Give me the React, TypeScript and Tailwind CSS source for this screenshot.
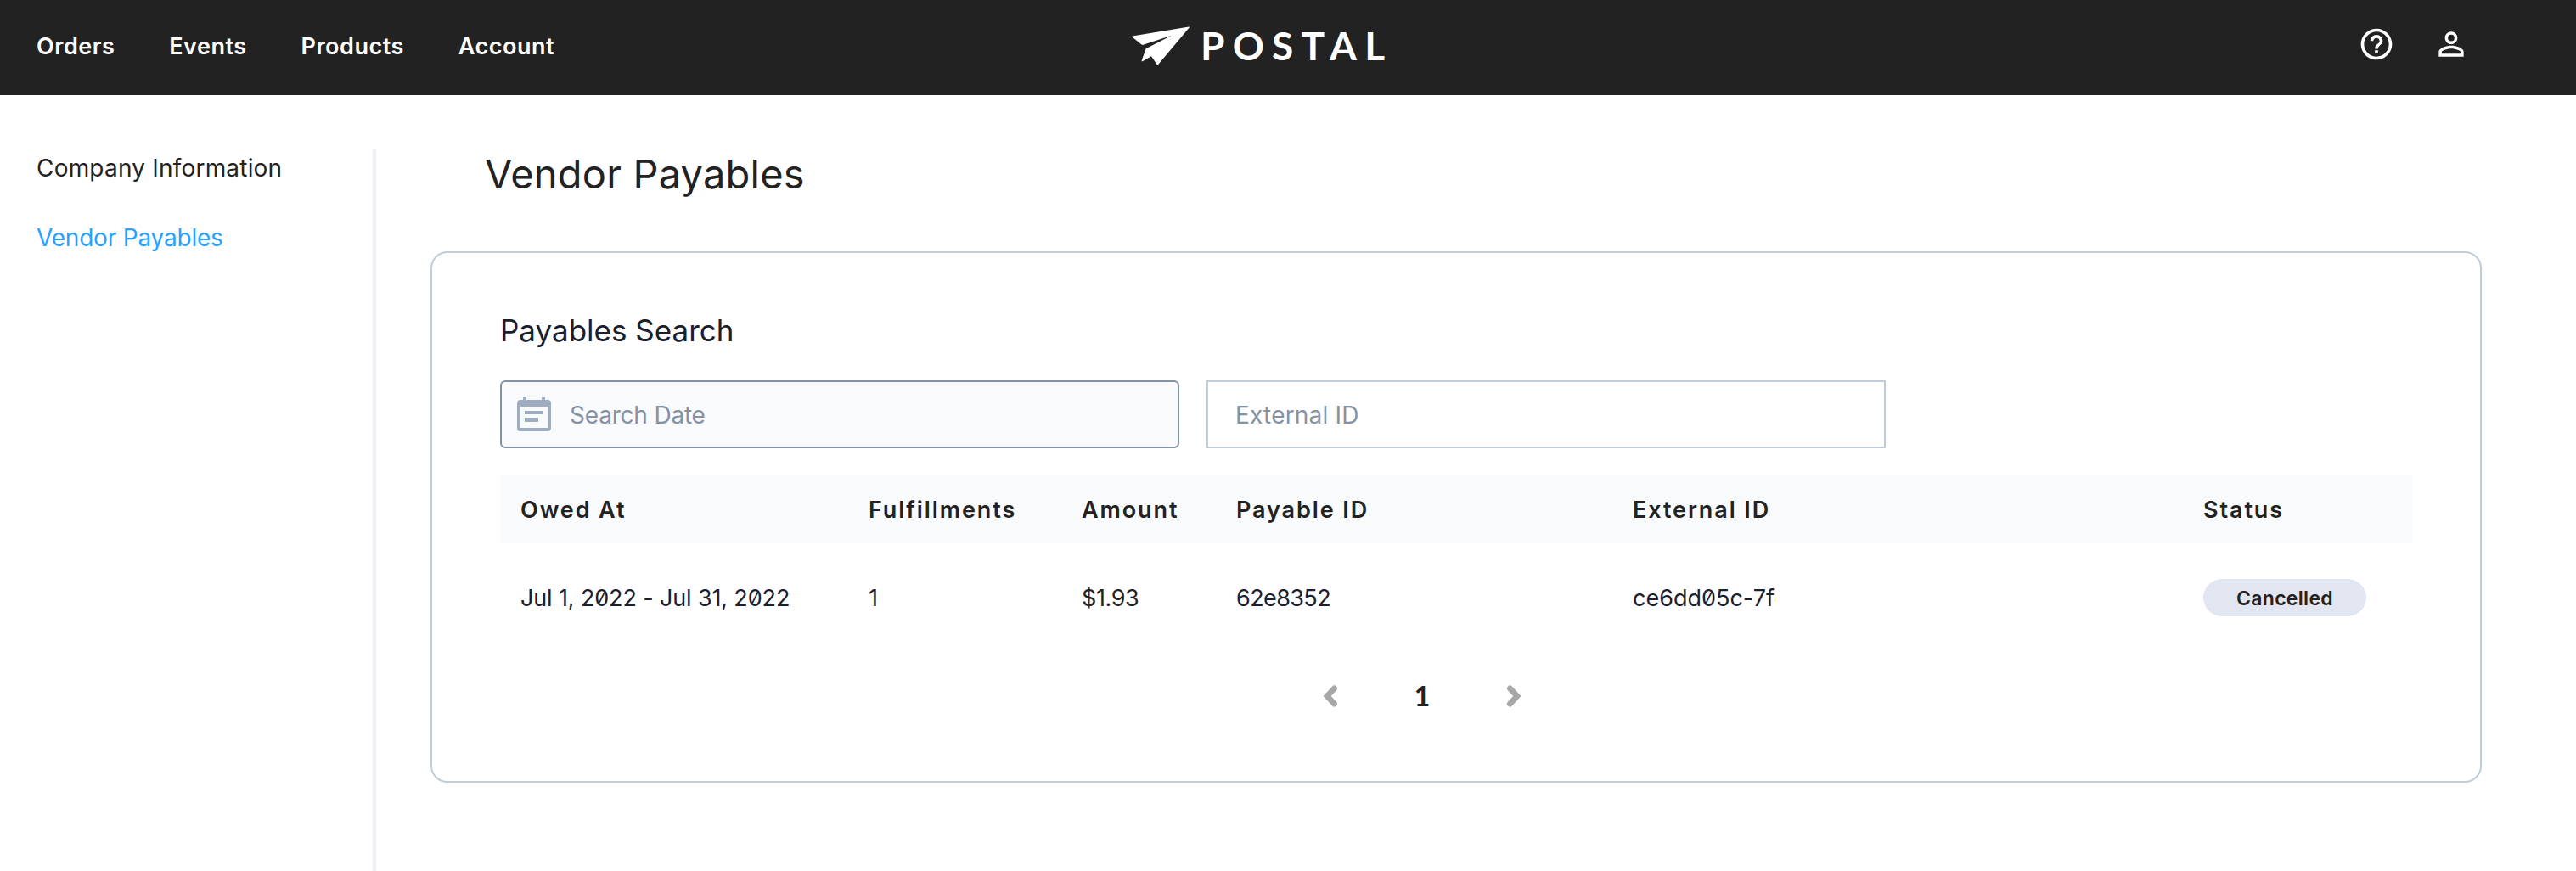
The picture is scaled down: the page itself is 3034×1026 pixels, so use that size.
import { useState } from "react";
import { MdHelpOutline, MdPersonOutline } from "react-icons/md";

const navLinks = ["Orders", "Events", "Products", "Account"];

const payables = [
  {
    owedAt: "Jul 1, 2022 - Jul 31, 2022",
    fulfillments: 1,
    amount: "$1.93",
    payableId: "62e8352c",
    externalId: "ce6dd05c-7fc",
    status: "Cancelled",
  },
];

const PlaneLogo = () => (
  <svg width="68" height="46" viewBox="0 0 204 137" fill="white">
    <path d="M2 34 202 1 Q205 1 203 4 L94 134 Q91 137 88 133 L69 105 38 123 Q34 125 35 120 L50 78 141 32 40 65 Q37 66 34 63 L2 38 Q-1 35 2 34Z" />
  </svg>
);

const CalendarIcon = () => (
  <svg width="40" height="40" viewBox="0 0 40 40" fill="#9fadc1" className="shrink-0">
    <path d="M7 0h4v3h18V0h4v3h3a4 4 0 0 1 4 4v29a4 4 0 0 1-4 4H4a4 4 0 0 1-4-4V7a4 4 0 0 1 4-4h3zM4 11v25h32V11z" fillRule="evenodd" />
    <path d="M9 16h22v4H9zM9 24h16v5H9z" />
  </svg>
);

const Chevron = ({ className = "" }: { className?: string }) => (
  <svg width="18" height="26" viewBox="0 0 18 26" fill="none" stroke="#a7a7a7" strokeWidth="6.8" strokeLinecap="round" className={className}>
    <path d="M13.6 3.9 5.2 13l8.4 9.1" />
  </svg>
);

const Header = () => (
  <header className="flex h-28 items-center bg-[#222] pb-1 text-white">
    <nav className="flex w-[1333px] shrink-0 gap-16 pt-0.5 pl-[43px] text-[27px] font-semibold tracking-[0.5px]">
      {navLinks.map((link) => (
        <a key={link} href="#">{link}</a>
      ))}
    </nav>
    <a href="#" className="flex items-center gap-[13px]">
      <PlaneLogo />
      <span className="font-['Lato',sans-serif] text-[46px] leading-none font-bold tracking-[9.2px]">POSTAL</span>
    </a>
    <div className="ml-auto flex items-center gap-11 pr-[125px] pb-1">
      <MdHelpOutline size={44} />
      <MdPersonOutline size={44} />
    </div>
  </header>
);

const Sidebar = () => (
  <aside className="flex w-[443px] shrink-0 flex-col gap-[42px] border-r-4 border-[#edf1f6] pt-0.5 pl-[43px] text-[28px] leading-10">
    <a href="#" className="tracking-[0.2px]">Company Information</a>
    <a href="#" className="tracking-[-0.2px] text-[#27a2ff]">Vendor Payables</a>
  </aside>
);

const PayablesTable = () => (
  <table className="mt-8 w-full table-fixed text-left text-[27px]">
    <colgroup>
      <col className="w-[410px]" />
      <col className="w-[251px]" />
      <col className="w-[182px]" />
      <col className="w-[467px]" />
      <col className="w-[672px]" />
      <col className="w-[270px]" />
    </colgroup>
    <thead>
      <tr className="h-20 bg-[#f9fafc] tracking-[1.9px]">
        <th className="pt-0.5 pl-6 font-semibold">Owed At</th>
        <th className="pt-0.5 pl-6 font-semibold">Fulfillments</th>
        <th className="pt-0.5 pl-6 font-semibold">Amount</th>
        <th className="pt-0.5 pl-6 font-semibold">Payable ID</th>
        <th className="pt-0.5 pl-6 font-semibold">External ID</th>
        <th className="pt-0.5 pl-6 font-semibold">Status</th>
      </tr>
    </thead>
    <tbody>
      {payables.map((p) => (
        <tr key={p.payableId} className="h-32 text-[#1a202e] [font-feature-settings:'zero']">
          <td className="pt-0.5 pl-6 tracking-[-0.14px]">{p.owedAt}</td>
          <td className="pt-0.5 pl-6">{p.fulfillments}</td>
          <td className="pt-0.5 pl-6 tracking-[-0.4px] text-[#222]">{p.amount}</td>
          <td className="pt-0.5 pl-6">
            <div className="w-[111px] overflow-hidden tracking-[-0.6px]">{p.payableId}</div>
          </td>
          <td className="pt-0.5 pl-6">
            <div className="w-[168px] overflow-hidden whitespace-nowrap">{p.externalId}</div>
          </td>
          <td className="pl-6">
            <div className="flex h-11 w-48 items-center justify-center rounded-full bg-[#e1e6f0] pt-0.5 text-[23px] font-semibold tracking-[0.3px] text-[#222]">
              {p.status}
            </div>
          </td>
        </tr>
      ))}
    </tbody>
  </table>
);

export default function App() {
  const [date, setDate] = useState("");
  const [externalId, setExternalId] = useState("");

  return (
    <div className="flex h-[1026px] w-[3034px] flex-col overflow-hidden bg-white font-['Inter',sans-serif] text-[#222]">
      <Header />
      <div className="flex flex-1 pt-16">
        <Sidebar />
        <main className="ml-16 w-[2416px]">
          <h1 className="pl-16 text-[47px] leading-[58px] tracking-[0.2px]">Vendor Payables</h1>

          <section className="mt-[62px] rounded-[20px] border-2 border-[#c0ccda] px-20 pt-[66px] pb-12">
            <h2 className="text-[35px] leading-[50px] text-[#1a202e]">Payables Search</h2>

            <div className="mt-[34px] flex gap-8 text-[28px]">
              <label className="flex h-20 w-[800px] items-center gap-[22px] rounded-md border-2 border-[#8492a6] bg-[#f9fafc] pl-[18px]">
                <CalendarIcon />
                <input
                  className="w-full pt-0.5 tracking-[-0.2px] outline-none placeholder:text-[#8492a6]"
                  placeholder="Search Date"
                  value={date}
                  onChange={(e) => setDate(e.target.value)}
                />
              </label>
              <input
                className="h-20 w-[800px] border-2 border-[#c0ccda] pt-0.5 pl-8 tracking-[0.2px] outline-none placeholder:text-[#8492a6]"
                placeholder="External ID"
                value={externalId}
                onChange={(e) => setExternalId(e.target.value)}
              />
            </div>

            <PayablesTable />

            <div className="flex h-[104px] items-center justify-center pr-20">
              <Chevron />
              <span className="w-[198px] text-center font-['Lato',sans-serif] text-[32px] font-bold">1</span>
              <Chevron className="rotate-180" />
            </div>
          </section>
        </main>
      </div>
    </div>
  );
}
